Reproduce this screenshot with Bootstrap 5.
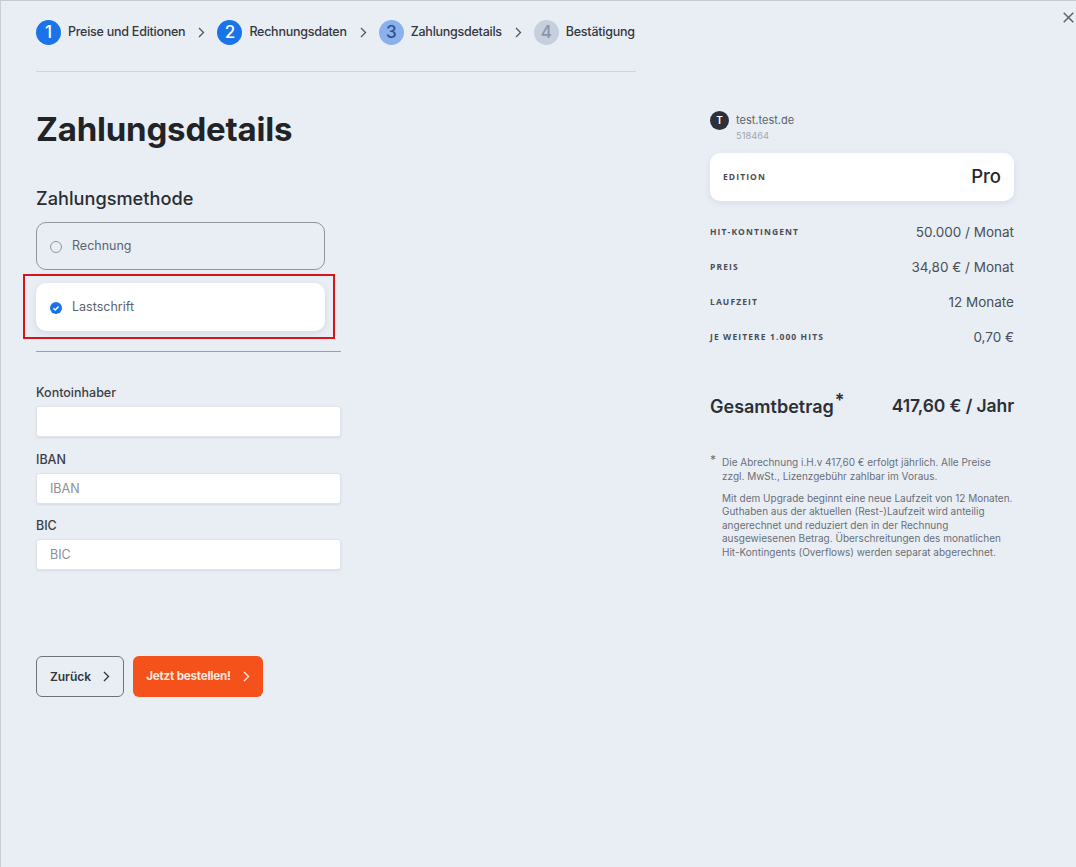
<!DOCTYPE html>
<html lang="de">
<head>
<meta charset="utf-8">
<title>Zahlungsdetails</title>
<link href="https://cdn.jsdelivr.net/npm/bootstrap@5.3.0/dist/css/bootstrap.min.css" rel="stylesheet">
<style>
html,body{height:100%;}
body{background:#e9eef5;font-family:Inter,"Liberation Sans",sans-serif;color:#22252b;overflow:hidden;}
.shell{width:1076px;height:867px;border-top:1px solid #c3cad4;border-left:1px solid #c9cfd8;padding:19px 0 0 35px;position:relative;}
.left-col{width:600px;}
.right-col{width:304px;margin-left:74px;padding-top:91px;}
.closer{position:absolute;top:11px;right:2px;line-height:0;}
.steps{height:25px;border:0;}
.step-num{width:25px;height:25px;border-radius:50%;font-size:17px;font-weight:500;flex:none;}
.num-done{background:#1a73e8;color:#fff;}
.num-active{background:#8bb1ec;color:#2c4f8f;}
.num-todo{background:#c6cfdd;color:#8a94a6;}
.step-text{font-size:12.5px;font-weight:500;letter-spacing:-.25px;color:#34383f;margin-left:7px;white-space:nowrap;}
.chev{margin:0 12px 0 13px;line-height:0;}
.top-rule{height:1px;background:#d0d5dc;margin-top:26px;}
.page-title{font-size:33px;font-weight:700;letter-spacing:-.2px;line-height:40px;margin:37px 0 0;color:#212327;}
.sub-title{font-size:18.2px;font-weight:500;line-height:24px;margin:37px 0 0;color:#2a2d33;}
.pay-box{width:289px;height:48px;border-radius:10px;padding-left:14px;padding-top:1px;font-size:12.5px;color:#5c6470;}
.pay-open{border:1px solid #8f959e;margin-top:12px;padding-left:13px;}
.pay-chosen{background:#fff;box-shadow:0 2px 6px rgba(60,70,90,.12);margin-top:13px;position:relative;}
.red-frame{position:absolute;left:-13px;top:-9px;width:312px;height:65px;border:2px solid #d5141c;pointer-events:none;}
.radio-off{width:12px;height:12px;border:1px solid #8f959e;border-radius:50%;margin-right:10px;flex:none;}
.radio-on{width:12px;height:12px;margin-right:10px;flex:none;line-height:0;}
.form-rule{width:305px;height:1px;background:#9aa0a9;margin-top:20px;}
.field-wrap{width:305px;}
.field-label{display:block;font-size:12.5px;font-weight:500;line-height:16px;color:#3a3e45;margin:0 0 5px;}
.field-input{height:31px;min-height:31px;border-radius:3px;border:1px solid #dfe3e8;background:#fff;box-shadow:0 1px 2px rgba(60,70,90,.1);font-size:12.5px;padding:0 13px;}
.field-input::placeholder{color:#8d9095;}
.field-gap{margin-top:14.5px;}
.first-field{margin-top:33px;}
.btn-row{margin-top:86px;gap:9px;}
.back-btn{width:88px;height:41px;border:1px solid #6d747e;border-radius:6px;background:transparent;font-size:12px;font-weight:600;color:#33373e;padding:0;}
.order-btn{width:130px;height:41px;border:0;border-radius:6px;background:#f4511b;color:#ffe9df;font-size:11.6px;font-weight:700;letter-spacing:-.2px;padding:0;}
.order-btn:hover{background:#f4511b;color:#ffe9df;}
.back-btn:hover{background:transparent;}
.avatar{width:19px;height:19px;border-radius:50%;background:#2d3038;color:#fff;font-size:10px;font-weight:600;flex:none;}
.site-name{font-size:11px;color:#5b626d;line-height:19px;margin-left:7px;}
.site-id{font-size:9.3px;color:#a2a7ae;line-height:12px;margin:0 0 0 26px;}
.edition-card{height:48px;background:#fff;border-radius:10px;box-shadow:0 2px 6px rgba(60,70,90,.1);padding:0 13px;margin-top:11px;}
.tiny-cap{font-size:8.5px;font-weight:700;letter-spacing:1.1px;color:#4a4e56;font-family:"Open Sans",sans-serif;}
.edition-val{font-size:18.5px;font-weight:500;color:#24272c;}
.info-row{height:35px;}
.info-list{margin-top:14px;}
.info-val{font-size:13.5px;color:#4a4f57;}
.total-row{margin-top:36px;height:30px;}
.total-label{font-size:18px;font-weight:600;color:#2c3036;}
.total-label sup{font-size:18px;top:-.3em;margin-left:1px;}
.total-val{font-size:17.5px;font-weight:600;color:#2c3036;letter-spacing:-.1px;}
.note-area{margin-top:35px;position:relative;padding-left:12px;font-size:10px;line-height:13.5px;color:#6a6f77;}
.note-star{position:absolute;left:0;top:-3px;font-size:12px;}
.note-area p{margin:0 0 8.5px;}
</style>
</head>
<body>
<div class="shell d-flex">
  <div class="closer">
    <svg width="11" height="11" viewBox="0 0 11 11"><path d="M.7.7l9.6 9.6M10.3.7L.7 10.3" stroke="#5d636c" stroke-width="1.5" fill="none"/></svg>
  </div>
  <main class="left-col">
    <nav class="steps d-flex align-items-center" aria-label="Schritte">
      <span class="step-num num-done d-flex align-items-center justify-content-center">1</span>
      <span class="step-text">Preise und Editionen</span>
      <span class="chev"><svg width="7" height="11" viewBox="0 0 7 11"><path d="M1 1l4.5 4.5L1 10" stroke="#50565f" stroke-width="1.3" fill="none"/></svg></span>
      <span class="step-num num-done d-flex align-items-center justify-content-center">2</span>
      <span class="step-text">Rechnungsdaten</span>
      <span class="chev"><svg width="7" height="11" viewBox="0 0 7 11"><path d="M1 1l4.5 4.5L1 10" stroke="#50565f" stroke-width="1.3" fill="none"/></svg></span>
      <span class="step-num num-active d-flex align-items-center justify-content-center">3</span>
      <span class="step-text">Zahlungsdetails</span>
      <span class="chev"><svg width="7" height="11" viewBox="0 0 7 11"><path d="M1 1l4.5 4.5L1 10" stroke="#50565f" stroke-width="1.3" fill="none"/></svg></span>
      <span class="step-num num-todo d-flex align-items-center justify-content-center">4</span>
      <span class="step-text">Bestätigung</span>
    </nav>
    <div class="top-rule"></div>
    <h1 class="page-title">Zahlungsdetails</h1>
    <h2 class="sub-title">Zahlungsmethode</h2>
    <div class="pay-box pay-open d-flex align-items-center"><span class="radio-off"></span>Rechnung</div>
    <div class="pay-box pay-chosen d-flex align-items-center">
      <span class="radio-on"><svg width="12" height="12" viewBox="0 0 12 12"><circle cx="6" cy="6" r="6" fill="#1a73e8"/><path d="M3.4 6.2l1.8 1.8 3.4-3.6" stroke="#fff" stroke-width="1.4" fill="none"/></svg></span>Lastschrift
      <span class="red-frame"></span>
    </div>
    <div class="form-rule"></div>
    <div class="field-wrap first-field">
      <label class="field-label" for="f1">Kontoinhaber</label>
      <input id="f1" class="form-control field-input" type="text">
    </div>
    <div class="field-wrap field-gap">
      <label class="field-label" for="f2">IBAN</label>
      <input id="f2" class="form-control field-input" type="text" placeholder="IBAN">
    </div>
    <div class="field-wrap field-gap">
      <label class="field-label" for="f3">BIC</label>
      <input id="f3" class="form-control field-input" type="text" placeholder="BIC">
    </div>
    <div class="btn-row d-flex">
      <button class="btn back-btn d-flex align-items-center justify-content-center gap-2" type="button">Zurück <svg class="ms-1" width="7" height="11" viewBox="0 0 7 11"><path d="M1 1l4.5 4.5L1 10" stroke="#33373e" stroke-width="1.4" fill="none"/></svg></button>
      <button class="btn order-btn d-flex align-items-center justify-content-center gap-2" type="button">Jetzt bestellen! <svg class="ms-1" width="7" height="11" viewBox="0 0 7 11"><path d="M1 1l4.5 4.5L1 10" stroke="#ffe9df" stroke-width="1.4" fill="none"/></svg></button>
    </div>
  </main>
  <aside class="right-col">
    <div class="d-flex align-items-center">
      <span class="avatar d-flex align-items-center justify-content-center">T</span>
      <span class="site-name">test.test.de</span>
    </div>
    <p class="site-id">518464</p>
    <div class="edition-card d-flex align-items-center justify-content-between">
      <span class="tiny-cap">EDITION</span><span class="edition-val">Pro</span>
    </div>
    <div class="info-list">
      <div class="info-row d-flex align-items-center justify-content-between"><span class="tiny-cap">HIT-KONTINGENT</span><span class="info-val">50.000 / Monat</span></div>
      <div class="info-row d-flex align-items-center justify-content-between"><span class="tiny-cap">PREIS</span><span class="info-val">34,80 € / Monat</span></div>
      <div class="info-row d-flex align-items-center justify-content-between"><span class="tiny-cap">LAUFZEIT</span><span class="info-val">12 Monate</span></div>
      <div class="info-row d-flex align-items-center justify-content-between"><span class="tiny-cap">JE WEITERE 1.000 HITS</span><span class="info-val">0,70 €</span></div>
    </div>
    <div class="total-row d-flex align-items-center justify-content-between">
      <span class="total-label">Gesamtbetrag<sup>*</sup></span><span class="total-val">417,60 € / Jahr</span>
    </div>
    <div class="note-area">
      <span class="note-star">*</span>
      <p>Die Abrechnung i.H.v 417,60 € erfolgt jährlich. Alle Preise zzgl. MwSt., Lizenzgebühr zahlbar im Voraus.</p>
      <p>Mit dem Upgrade beginnt eine neue Laufzeit von 12 Monaten. Guthaben aus der aktuellen (Rest-)Laufzeit wird anteilig angerechnet und reduziert den in der Rechnung ausgewiesenen Betrag. Überschreitungen des monatlichen Hit-Kontingents (Overflows) werden separat abgerechnet.</p>
    </div>
  </aside>
</div>
<script src="https://cdn.jsdelivr.net/npm/bootstrap@5.3.0/dist/js/bootstrap.bundle.min.js"></script>
</body>
</html>
